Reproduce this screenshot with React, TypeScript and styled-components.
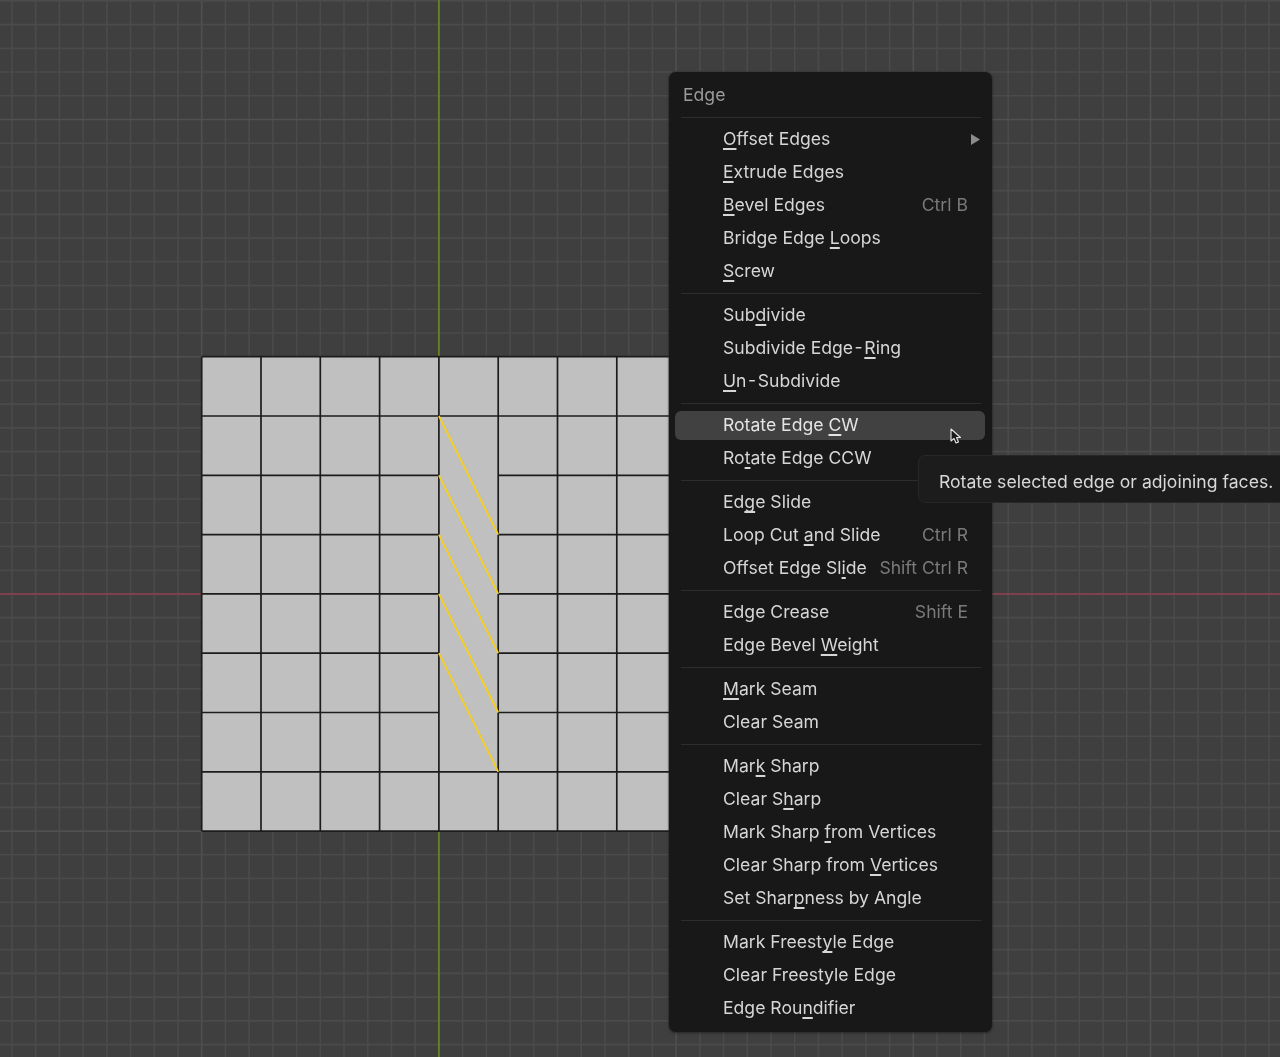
import React from "react";
import styled, { createGlobalStyle } from "styled-components";

const Global = createGlobalStyle`
  html, body { margin: 0; padding: 0; background: #3f3f3f; }
`;

const Canvas = styled.div`
  position: relative;
  width: 1280px;
  height: 1057px;
  overflow: hidden;
  background: #3f3f3f;
  font-family: Inter, "Liberation Sans", sans-serif;
`;

const Viewport = styled.svg`
  display: block;
  filter: blur(0.3px);
`;

const Menu = styled.div`
  position: absolute;
  left: 669px;
  top: 72px;
  width: 323px;
  box-sizing: border-box;
  padding: 6.5px 0 7.5px;
  background: #181818;
  border-radius: 7px;
  box-shadow: 0 0 0 1px #2a2a2a66, 0 1px 3px #0006;
  filter: blur(0.3px);
`;

const Title = styled.div`
  height: 33px;
  line-height: 31px;
  padding-left: 14px;
  font-size: 17.6px;
  color: #9a9a9a;
`;

const Separator = styled.div`
  display: flex;
  align-items: center;
  height: 11px;
  padding: 0 11px 0 12px;

  &::after {
    content: "";
    flex: 1;
    height: 1px;
    background: #2d2d2d;
  }
`;

const Row = styled.div<{ $active?: boolean }>`
  position: relative;
  box-sizing: border-box;
  display: flex;
  align-items: center;
  justify-content: space-between;
  height: ${(p) => (p.$active ? "29px" : "33px")};
  margin: ${(p) => (p.$active ? "2px 7px 2px 6px" : "0")};
  padding: ${(p) => (p.$active ? "0 17px 2px 48px" : "0 24px 2px 54px")};
  border-radius: 6px;
  background: ${(p) => (p.$active ? "#414141" : "transparent")};
  font-size: 17.6px;
  color: ${(p) => (p.$active ? "#e4e4e4" : "#d6d6d6")};
  white-space: nowrap;
`;

const Mnemonic = styled.span`
  text-decoration: underline;
  text-decoration-thickness: 1.5px;
  text-underline-offset: 2.5px;
  text-decoration-skip-ink: none;
`;

const Shortcut = styled.span`
  color: #7a7a7a;
`;

const Arrow = styled.svg`
  position: absolute;
  right: 12px;
  top: 11px;
`;

const Tooltip = styled.div`
  position: absolute;
  left: 918px;
  top: 455px;
  width: 400px;
  height: 48px;
  box-sizing: border-box;
  padding: 4px 0 0 20px;
  display: flex;
  align-items: center;
  background: #1c1c1c;
  border: 1px solid #272727;
  border-radius: 7px;
  font-size: 17.6px;
  color: #d8d8d8;
  white-space: nowrap;
  filter: blur(0.3px);
`;

const Pointer = styled.svg`
  position: absolute;
  left: 949px;
  top: 427px;
`;

type Item = { text: string; shortcut?: string; submenu?: boolean; active?: boolean };

const groups: Item[][] = [
  [
    { text: "_Offset Edges", submenu: true },
    { text: "_Extrude Edges" },
    { text: "_Bevel Edges", shortcut: "Ctrl B" },
    { text: "Bridge Edge _Loops" },
    { text: "_Screw" },
  ],
  [
    { text: "Sub_divide" },
    { text: "Subdivide Edge\u200A-\u200A_Ring" },
    { text: "_Un\u200A-\u200ASubdivide" },
  ],
  [
    { text: "Rotate Edge _CW", active: true },
    { text: "Ro_tate Edge CCW" },
  ],
  [
    { text: "Ed_ge Slide" },
    { text: "Loop Cut _and Slide", shortcut: "Ctrl R" },
    { text: "Offset Edge Sl_ide", shortcut: "Shift Ctrl R" },
  ],
  [
    { text: "Edge Crease", shortcut: "Shift E" },
    { text: "Edge Bevel _Weight" },
  ],
  [
    { text: "_Mark Seam" },
    { text: "Clear Seam" },
  ],
  [
    { text: "Mar_k Sharp" },
    { text: "Clear S_harp" },
    { text: "Mark Sharp _from Vertices" },
    { text: "Clear Sharp from _Vertices" },
    { text: "Set Shar_pness by Angle" },
  ],
  [
    { text: "Mark Freest_yle Edge" },
    { text: "Clear Freestyle Edge" },
    { text: "Edge Rou_ndifier" },
  ],
];

function Label({ text }: { text: string }) {
  const i = text.indexOf("_");
  if (i < 0) return <span>{text}</span>;
  return (
    <span>
      {text.slice(0, i)}
      <Mnemonic>{text[i + 1]}</Mnemonic>
      {text.slice(i + 2)}
    </span>
  );
}

const GRID = 23.72;
const CELL = 59.3;
const MX = 201.7;
const MY = 356.7;

function Scene() {
  const vertical: React.ReactNode[] = [];
  const horizontal: React.ReactNode[] = [];
  for (let k = -9; k < 46; k++) {
    const x = MX + k * GRID;
    const major = ((k % 10) + 10) % 10 === 0;
    vertical.push(
      <line key={k} x1={x} x2={x} y1={0} y2={1057} stroke={major ? "#505050" : "#4b4b4b"} strokeWidth={1.6} />
    );
  }
  for (let k = -16; k < 30; k++) {
    const y = MY + k * GRID;
    const major = ((k % 10) + 10) % 10 === 0;
    horizontal.push(
      <line key={k} x1={0} x2={1280} y1={y} y2={y} stroke={major ? "#505050" : "#4b4b4b"} strokeWidth={1.6} />
    );
  }
  const cols = Array.from({ length: 9 }, (_, i) => MX + i * CELL);
  const rows = Array.from({ length: 9 }, (_, i) => MY + i * CELL);
  const edge = "#1c1c1c";
  return (
    <Viewport width={1280} height={1057} viewBox="0 0 1280 1057">
      {vertical}
      {horizontal}
      <line x1={0} x2={1280} y1={593.9} y2={593.9} stroke="#8e3d4c" strokeWidth={1.5} />
      <line x1={438.9} x2={438.9} y1={0} y2={1057} stroke="#6d8f22" strokeWidth={1.5} />
      <rect x={MX} y={MY} width={CELL * 8} height={CELL * 8} fill="#bfc0bf" />
      {cols.map((x, i) => (
        <line key={i} x1={x} x2={x} y1={MY} y2={rows[8]} stroke={edge} strokeWidth={1.7} />
      ))}
      {rows.map((y, i) =>
        i >= 2 && i <= 6 ? (
          <g key={i}>
            <line x1={cols[0]} x2={cols[4]} y1={y} y2={y} stroke={edge} strokeWidth={1.7} />
            <line x1={cols[5]} x2={cols[8]} y1={y} y2={y} stroke={edge} strokeWidth={1.7} />
          </g>
        ) : (
          <line key={i} x1={cols[0]} x2={cols[8]} y1={y} y2={y} stroke={edge} strokeWidth={1.7} />
        )
      )}
      {[1, 2, 3, 4, 5].map((i) => (
        <line key={i} x1={cols[4]} y1={rows[i]} x2={cols[5]} y2={rows[i + 2]} stroke="#f7cf1c" strokeWidth={1.8} />
      ))}
    </Viewport>
  );
}

export default function App() {
  return (
    <Canvas>
      <Global />
      <Scene />
      <Menu>
        <Title>Edge</Title>
        <Separator />
        {groups.map((group, g) => (
          <React.Fragment key={g}>
            {g > 0 && <Separator />}
            {group.map((item) => (
              <Row key={item.text} $active={item.active}>
                <Label text={item.text} />
                {item.shortcut && <Shortcut>{item.shortcut}</Shortcut>}
                {item.submenu && (
                  <Arrow width={9} height={11} viewBox="0 0 9 11">
                    <path d="M0 0 L9 5.5 L0 11 Z" fill="#8c8c8c" />
                  </Arrow>
                )}
              </Row>
            ))}
          </React.Fragment>
        ))}
      </Menu>
      <Pointer width={14} height={19} viewBox="0 0 14 19">
        <path
          d="M2 2 L2 14 L5 11.5 L7 16 L9.5 15 L7.5 10.5 L11.5 10.5 Z"
          fill="#1a1a1a"
          stroke="#e6e6e6"
          strokeWidth={1.1}
          strokeLinejoin="round"
        />
      </Pointer>
      <Tooltip>Rotate selected edge or adjoining faces.</Tooltip>
    </Canvas>
  );
}
